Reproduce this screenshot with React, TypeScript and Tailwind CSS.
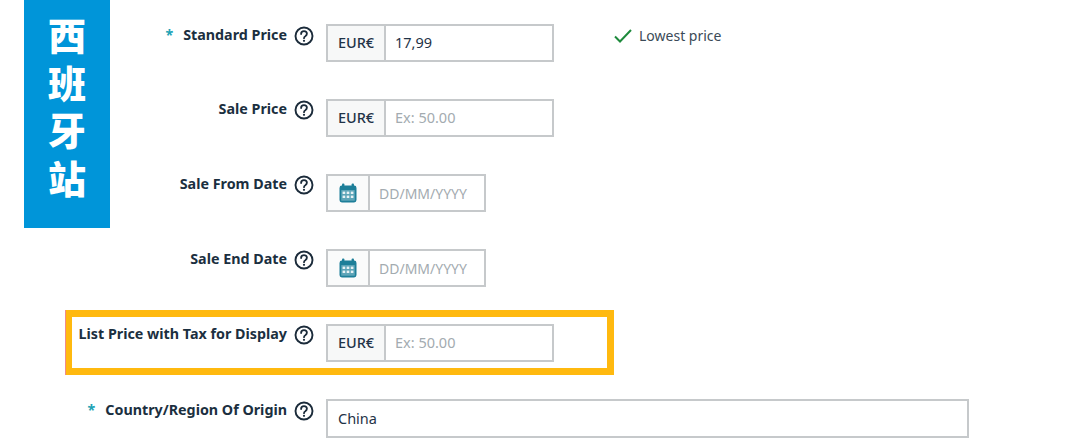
function HelpIcon() {
  return (
    <svg viewBox="0 0 20 20" className="w-[20px] h-[20px] shrink-0" fill="none">
      <circle cx="10" cy="10" r="8.5" stroke="#1b2b3a" strokeWidth="1.9" />
      <path
        d="M7.1 8c0-1.8 1.2-2.8 2.9-2.8s2.9 1 2.9 2.6c0 1.2-.7 1.8-1.6 2.4-.9.5-1.3 1-1.3 2"
        stroke="#1b2b3a"
        strokeWidth="1.8"
        strokeLinecap="round"
      />
      <circle cx="10" cy="14.8" r="1.1" fill="#1b2b3a" />
    </svg>
  );
}

function CalendarIcon() {
  return (
    <svg viewBox="0 0 18 20" className="w-[18px] h-[20px]">
      <rect x="3" y="0.5" width="2.4" height="4" rx="1" fill="#1d7f99" />
      <rect x="12.6" y="0.5" width="2.4" height="4" rx="1" fill="#1d7f99" />
      <rect x="0.5" y="2.5" width="17" height="17" rx="2.4" fill="#1d7f99" />
      <rect x="2.2" y="7" width="13.6" height="10.8" rx="0.6" fill="#5ea5b8" />
      <g fill="#e8f2f5">
        <rect x="3.6" y="8.6" width="2.6" height="2.4" />
        <rect x="7.7" y="8.6" width="2.6" height="2.4" />
        <rect x="11.8" y="8.6" width="2.6" height="2.4" />
        <rect x="3.6" y="12.6" width="2.6" height="2.4" />
        <rect x="7.7" y="12.6" width="2.6" height="2.4" />
        <rect x="11.8" y="12.6" width="2.6" height="2.4" />
      </g>
    </svg>
  );
}

function Label({ text, required }: { text: string; required?: boolean }) {
  return (
    <div className={`w-[326px] shrink-0 flex justify-end items-start pr-[12px] ${required ? "pt-[2px]" : "pt-[1px]"}`}>
      <div className="flex items-start -mt-[1px] text-[14.3px] leading-[20px] font-bold text-[#1b2f40] whitespace-nowrap">
        {required && <span className="text-[#21a3b5] mr-[10px] font-bold">*</span>}
        <span className="mr-[7px]">{text}</span>
      </div>
      <HelpIcon />
    </div>
  );
}

function PriceInput({ value, placeholder }: { value?: string; placeholder?: string }) {
  return (
    <div className="w-[228px] h-[38px] flex border-2 border-[#c6c9cb] bg-white text-[14.5px]">
      <div className="w-[58px] shrink-0 flex items-center justify-center bg-[#f7f8f8] border-r-2 border-[#c6c9cb] text-[#1f3347] font-medium">
        EUR€
      </div>
      <div className={`flex items-center pl-[9px] ${value ? "text-[#1f3347]" : "text-[#a3abb0]"}`}>
        {value ?? placeholder}
      </div>
    </div>
  );
}

function DateInput() {
  return (
    <div className="w-[160px] h-[38px] flex border-2 border-[#c6c9cb] bg-white text-[14px]">
      <div className="w-[42px] shrink-0 flex items-center justify-center bg-[#fafbfb] border-r-2 border-[#c6c9cb]">
        <CalendarIcon />
      </div>
      <div className="flex items-center pl-[9px] text-[#a3abb0]">DD/MM/YYYY</div>
    </div>
  );
}

export default function App() {
  return (
    <div
      className="relative w-[1074px] h-[443px] overflow-hidden bg-white pt-[24px] flex flex-col gap-[37px]"
      style={{ fontFamily: '"Noto Sans", "Liberation Sans", sans-serif' }}
    >
      {/* Site tag */}
      <div
        className="absolute left-[24px] top-0 w-[86px] h-[228px] bg-[#0095d9] flex flex-col items-center pt-[10px] text-white text-[38px] leading-[47.5px] font-black"
        style={{ fontFamily: '"Noto Sans CJK SC", sans-serif' }}
      >
        <span>西</span>
        <span>班</span>
        <span>牙</span>
        <span>站</span>
      </div>

      <div className="flex items-start">
        <Label text="Standard Price" required />
        <PriceInput value="17,99" />
        <div className="ml-[60px] mt-[1px] flex items-center text-[14px] leading-[22px] text-[#3b4a57]">
          <svg viewBox="0 0 18 14" className="w-[18px] h-[14px] mr-[7px]" fill="none">
            <path d="M1 7.5l5 5L17 1" stroke="#1e8a3c" strokeWidth="2" />
          </svg>
          Lowest price
        </div>
      </div>

      <div className="flex items-start">
        <Label text="Sale Price" />
        <PriceInput placeholder="Ex: 50.00" />
      </div>

      <div className="flex items-start">
        <Label text="Sale From Date" />
        <DateInput />
      </div>

      <div className="flex items-start">
        <Label text="Sale End Date" />
        <DateInput />
      </div>

      <div className="flex items-start">
        <Label text="List Price with Tax for Display" />
        <PriceInput placeholder="Ex: 50.00" />
      </div>

      <div className="flex items-start">
        <Label text="Country/Region Of Origin" required />
        <div className="w-[643px] h-[39px] flex items-center border-2 border-[#c6c9cb] pl-[10px] text-[14.5px] text-[#1f3347]">
          China
        </div>
      </div>

      {/* Highlight around the list price row */}
      <div className="absolute left-[66px] top-[310px] w-[548px] h-[65px] border-y-[7px] border-l-[6px] border-r-[7px] border-[#ffb90f] shadow-[-1px_0_0_#f08a8a]" />
    </div>
  );
}
